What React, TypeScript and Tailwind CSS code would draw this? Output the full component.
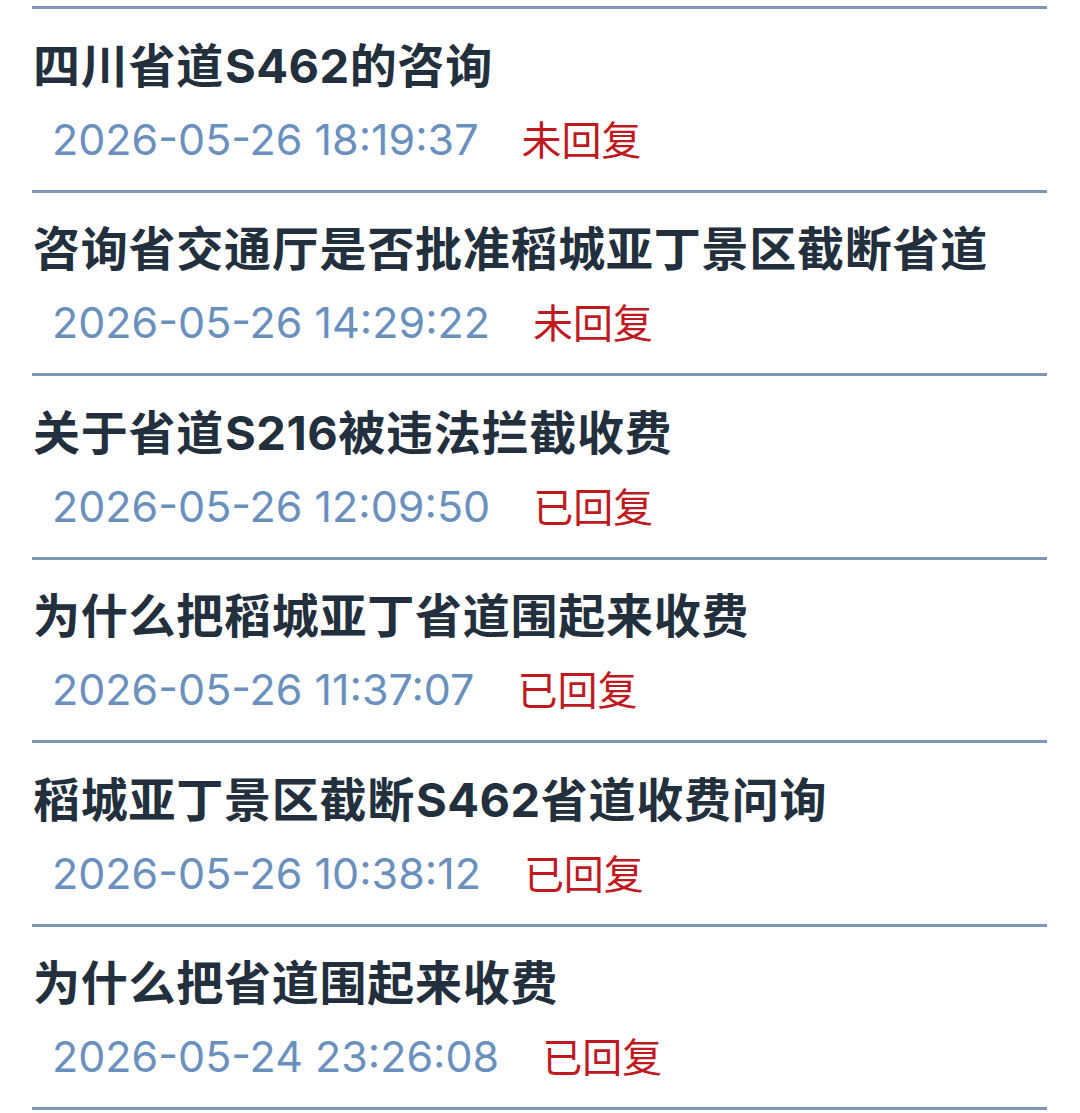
import React from "react";

const items = [
  { title: "四川省道S462的咨询", date: "2026-05-26 18:19:37", status: "未回复" },
  { title: "咨询省交通厅是否批准稻城亚丁景区截断省道", date: "2026-05-26 14:29:22", status: "未回复" },
  { title: "关于省道S216被违法拦截收费", date: "2026-05-26 12:09:50", status: "已回复" },
  { title: "为什么把稻城亚丁省道围起来收费", date: "2026-05-26 11:37:07", status: "已回复" },
  { title: "稻城亚丁景区截断S462省道收费问询", date: "2026-05-26 10:38:12", status: "已回复" },
  { title: "为什么把省道围起来收费", date: "2026-05-24 23:26:08", status: "已回复" },
];

function Title({ text }: { text: string }) {
  const parts = text.split(/([A-Za-z0-9]+)/).filter((p) => p.length > 0);
  return (
    <>
      {parts.map((p, i) =>
        /^[A-Za-z0-9]+$/.test(p) ? (
          <span
            key={i}
            className="tracking-[0.5px] pl-[1px] proportional-nums"
            style={{ fontFamily: 'Inter, "DejaVu Sans", sans-serif' }}
          >
            {p}
          </span>
        ) : (
          <span key={i}>{p}</span>
        )
      )}
    </>
  );
}

export default function App() {
  return (
    <div className="w-[1080px] h-[1113px] bg-white overflow-hidden pt-[6px]">
      <div className="ml-[32px] w-[1015px] border-b-[3px] border-[#7d97b6]">
        {items.map((it, i) => (
          <div
            key={i}
            className="border-t-[3px] border-[#7d97b6] h-[183.5px] flex flex-col pt-[29px]"
          >
            <div
              className="text-[47px] leading-[56px] font-bold tracking-[0.75px] text-[#222f3d] pl-[1px] whitespace-nowrap"
              style={{ fontFamily: '"DejaVu Sans", "Noto Sans CJK SC", sans-serif' }}
            >
              <Title text={it.title} />
            </div>
            <div className="mt-[15px] flex items-baseline pl-[20px] whitespace-nowrap">
              <span
                className="text-[43px] leading-[56px] text-[#6a90bd] proportional-nums"
                style={{ fontFamily: 'Inter, "Liberation Sans", sans-serif' }}
              >
                {it.date}
              </span>
              <span
                className="ml-[43px] text-[40px] leading-[56px] text-[#bf1a1f]"
                style={{ fontFamily: '"Noto Sans CJK SC", sans-serif' }}
              >
                {it.status}
              </span>
            </div>
          </div>
        ))}
      </div>
    </div>
  );
}
